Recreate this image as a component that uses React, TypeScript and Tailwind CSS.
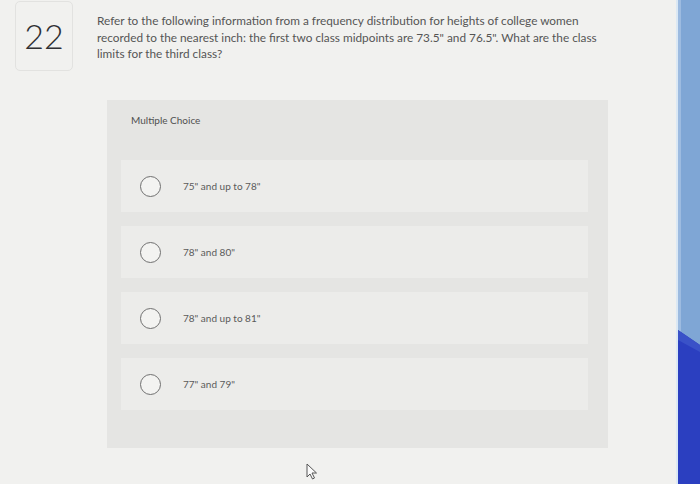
import React from "react";

const options = ['75" and up to 78"', '78" and 80"', '78" and up to 81"', '77" and 79"'];

export default function App() {
  return (
    <div className="flex h-[484px] w-[700px] overflow-hidden bg-[#f1f1ef]" style={{ fontFamily: "Lato, 'Open Sans', sans-serif" }}>
      <div className="relative flex-1">
        <div className="flex pt-[1px]">
          <div className="ml-[15px] flex h-[70px] w-[58px] items-center justify-center rounded-[5px] border border-[#e2e2e0] text-[34px] font-light leading-none text-[#2f3033]">
            22
          </div>
          <p className="ml-[24px] mt-[12px] w-[515px] text-[11.8px] leading-[16.5px] text-[#555]">
            Refer to the following information from a frequency distribution for heights of college women recorded to the nearest inch: the first two class midpoints are 73.5" and 76.5". What are the class limits for the third class?
          </p>
        </div>
        <div className="ml-[107px] mt-[29px] h-[348px] w-[501px] bg-[#e5e5e3] pl-[14px] pr-[20px] pt-[14px]">
          <div className="pl-[10px] text-[10px] leading-[12px] text-[#505050]">Multiple Choice</div>
          <div className="mt-[34px] flex flex-col gap-[14px]">
            {options.map((o) => (
              <div key={o} className="flex h-[52px] items-center bg-[#ececea] pl-[19px]">
                <div className="h-[21px] w-[21px] rounded-full border-[1.5px] border-[#707070] bg-[#f3f3f1]" />
                <span className="ml-[22px] text-[10px] text-[#5a5a5a]">{o}</span>
              </div>
            ))}
          </div>
        </div>
        <svg className="absolute left-[306px] top-[463px]" width="12" height="17" viewBox="0 0 12 17">
          <path d="M1 1 L1 14 L4 11 L6.5 16 L8.5 15 L6 10 L10.5 10 Z" fill="#fafafa" stroke="#555" strokeWidth="1" strokeLinejoin="round" />
        </svg>
      </div>
      <div className="w-[24px] border-l-[2px] border-[#dbe8f4]">
        <svg width="22" height="484" viewBox="0 0 22 484" preserveAspectRatio="none">
          <rect x="0" y="0" width="22" height="484" fill="#7fa6d5" />
          <rect x="0" y="0" width="3" height="484" fill="#9dbbe0" />
          <path d="M0 330 L22 345 L22 484 L0 484 Z" fill="#2b3fc0" />
          <path d="M0 330 L22 345 L22 352 L0 340 Z" fill="#3a52c8" />
        </svg>
      </div>
    </div>
  );
}
